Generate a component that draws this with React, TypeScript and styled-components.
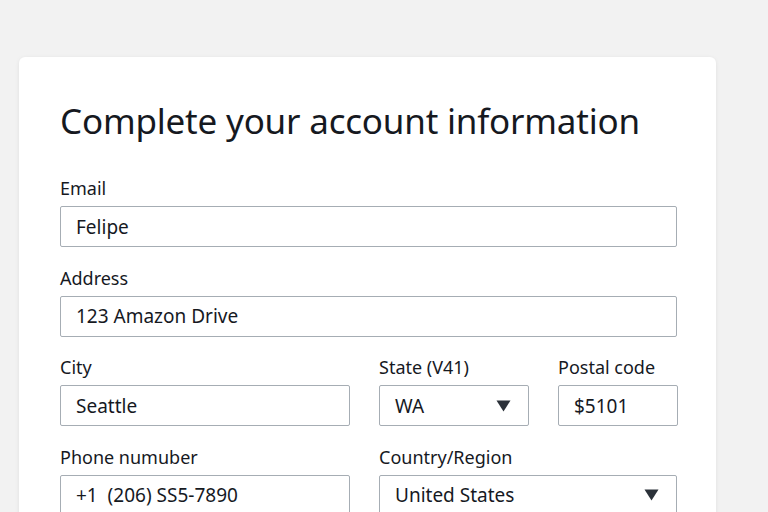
import styled, { createGlobalStyle } from 'styled-components';

const GlobalStyle = createGlobalStyle`
  html, body {
    margin: 0;
    padding: 0;
    background: #f2f2f2;
  }
  body {
    font-family: 'Noto Sans', 'Open Sans', sans-serif;
    color: #16191f;
  }
`;

export default function App() {
  return (
    <>
      <GlobalStyle />
      <Page>
        <Card>
          <Title>Complete your account information</Title>
          <Form>
            <Field>
              <Label>Email</Label>
              <Input>Felipe</Input>
            </Field>
            <Field>
              <Label>Address</Label>
              <Input>123 Amazon Drive</Input>
            </Field>
            <Row>
              <Field>
                <Label>City</Label>
                <Input>Seattle</Input>
              </Field>
              <Field>
                <Label>State (V41)</Label>
                <Select>
                  <span>WA</span>
                  <Caret />
                </Select>
              </Field>
              <Field>
                <Label>Postal code</Label>
                <Input>$5101</Input>
              </Field>
            </Row>
            <Row2>
              <Field>
                <Label>Phone numuber</Label>
                <Input>+1&nbsp; (206) SS5-7890</Input>
              </Field>
              <Field>
                <Label>Country/Region</Label>
                <Select>
                  <span>United States</span>
                  <Caret />
                </Select>
              </Field>
            </Row2>
          </Form>
        </Card>
      </Page>
    </>
  );
}

function Caret() {
  return (
    <CaretSvg width="15" height="12" viewBox="0 0 15 12">
      <path d="M0.5 0.5 L14.5 0.5 L7.5 11.5 Z" fill="#2b3139" />
    </CaretSvg>
  );
}

const Page = styled.div`
  padding: 57px 52px 0 19px;
  height: 512px;
  box-sizing: border-box;
  overflow: hidden;
`;

const Card = styled.div`
  width: 697px;
  min-height: 520px;
  box-sizing: border-box;
  background: #fff;
  border-radius: 6px;
  box-shadow: 0 1px 4px rgba(0, 0, 0, 0.08);
  padding: 42px 39px 40px 41px;
`;

const Title = styled.h1`
  margin: 0 0 33px;
  font-size: 35px;
  line-height: 44px;
  font-weight: 400;
  letter-spacing: -0.2px;
`;

const Form = styled.div`
  display: flex;
  flex-direction: column;
  gap: 18.5px;
`;

const Row = styled.div`
  display: grid;
  grid-template-columns: 290px 150px 120px;
  column-gap: 29px;
`;

const Row2 = styled.div`
  display: grid;
  grid-template-columns: 290px 298px;
  column-gap: 29px;
`;

const Field = styled.div`
  display: flex;
  flex-direction: column;
`;

const Label = styled.label`
  font-size: 18px;
  line-height: 24px;
  margin-bottom: 6px;
`;

const Input = styled.div`
  height: 41px;
  box-sizing: border-box;
  border: 1px solid #a6adb4;
  border-radius: 2px;
  padding: 0 15px;
  display: flex;
  align-items: center;
  font-size: 19px;
  white-space: nowrap;
`;

const Select = styled(Input)`
  justify-content: space-between;
  padding-right: 17px;
`;

const CaretSvg = styled.svg`
  display: block;
  flex-shrink: 0;
`;
